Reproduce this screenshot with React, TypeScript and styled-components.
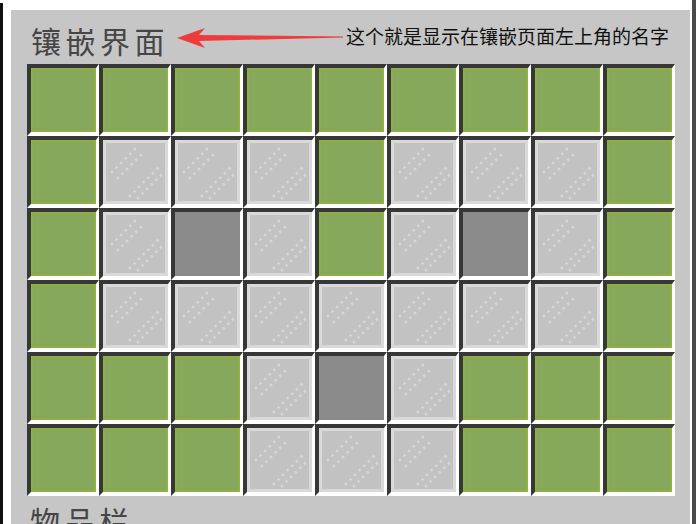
import styled, { createGlobalStyle } from "styled-components";

type Kind = "green" | "glass" | "empty";

const G: Kind = "green";
const W: Kind = "glass";
const E: Kind = "empty";

const layout: Kind[][] = [
  [G, G, G, G, G, G, G, G, G],
  [G, W, W, W, G, W, W, W, G],
  [G, W, E, W, G, W, E, W, G],
  [G, W, W, W, W, W, W, W, G],
  [G, G, G, W, E, W, G, G, G],
  [G, G, G, W, W, W, G, G, G],
];

const GlassStreaks: React.FC = () => (
  <svg width="58" height="58" viewBox="0 0 58 58">
    <g stroke="#d6d6d6" strokeWidth="2.5" strokeDasharray="2.5 4" fill="none">
      <line x1="4" y1="30" x2="30" y2="4" />
      <line x1="10" y1="36" x2="36" y2="10" />
      <line x1="22" y1="54" x2="54" y2="22" />
      <line x1="30" y1="56" x2="56" y2="30" />
    </g>
  </svg>
);

const App: React.FC = () => {
  return (
    <>
      <GlobalStyle />
      <Page>
        <LeftBar />
        <Panel>
          <TitleRow>
            <Title>镶嵌界面</Title>
            <Arrow width="166" height="22" viewBox="0 0 166 22">
              <polygon points="0,11 28,1 22,8 166,9.5 166,10.5 22,14 28,21" fill="#ee3b3b" />
            </Arrow>
            <Note>这个就是显示在镶嵌页面左上角的名字</Note>
          </TitleRow>
          <Grid>
            {layout.flat().map((kind, i) => (
              <Slot key={i}>
                {kind === "green" && <Green />}
                {kind === "glass" && (
                  <Glass>
                    <GlassStreaks />
                  </Glass>
                )}
              </Slot>
            ))}
          </Grid>
          <Title>物品栏</Title>
        </Panel>
        <RightBar />
      </Page>
    </>
  );
};

const GlobalStyle = createGlobalStyle`
  html, body {
    margin: 0;
    padding: 0;
    background: #fff;
    overflow: hidden;
  }
`;

const Page = styled.div`
  display: flex;
  width: 696px;
  height: 524px;
  font-family: "Noto Sans CJK SC", sans-serif;
`;

const LeftBar = styled.div`
  width: 3px;
  margin-top: 3px;
  margin-right: 8px;
  background: #111;
`;

const RightBar = styled.div`
  width: 4px;
  margin-left: 2px;
  background: #4a4a4a;
`;

const Panel = styled.div`
  flex: 1;
  margin-top: 10px;
  padding-left: 16px;
  background: #c6c6c6;
  overflow: hidden;
`;

const TitleRow = styled.div`
  display: flex;
  align-items: center;
  height: 54px;
  padding-left: 1px;
`;

const Title = styled.div`
  font-size: 30px;
  line-height: 36px;
  letter-spacing: 4.5px;
  color: #464646;
  margin-top: 6px;
  padding-left: 3px;
`;

const Arrow = styled.svg`
  margin-left: 8px;
  margin-top: 2px;
`;

const Note = styled.div`
  margin-left: 3px;
  margin-bottom: 4px;
  font-size: 19px;
  color: #111;
  white-space: nowrap;
`;

const Grid = styled.div`
  display: grid;
  grid-template-columns: repeat(9, 72px);
  grid-auto-rows: 72px;
`;

const Slot = styled.div`
  box-sizing: border-box;
  border-style: solid;
  border-width: 4px 3px 4px 4px;
  border-color: #373737 #fff #fff #373737;
  background: #8b8b8b;
`;

const Green = styled.div`
  width: 100%;
  height: 100%;
  background: #86a85a;
  box-shadow: inset 0 0 0 1.5px #8fb240;
`;

const Glass = styled.div`
  box-sizing: border-box;
  width: 100%;
  height: 100%;
  border: 3px solid #d9d9d9;
  background: #c2c2c2;
  display: flex;
  align-items: center;
  justify-content: center;
  overflow: hidden;
`;

export default App;
